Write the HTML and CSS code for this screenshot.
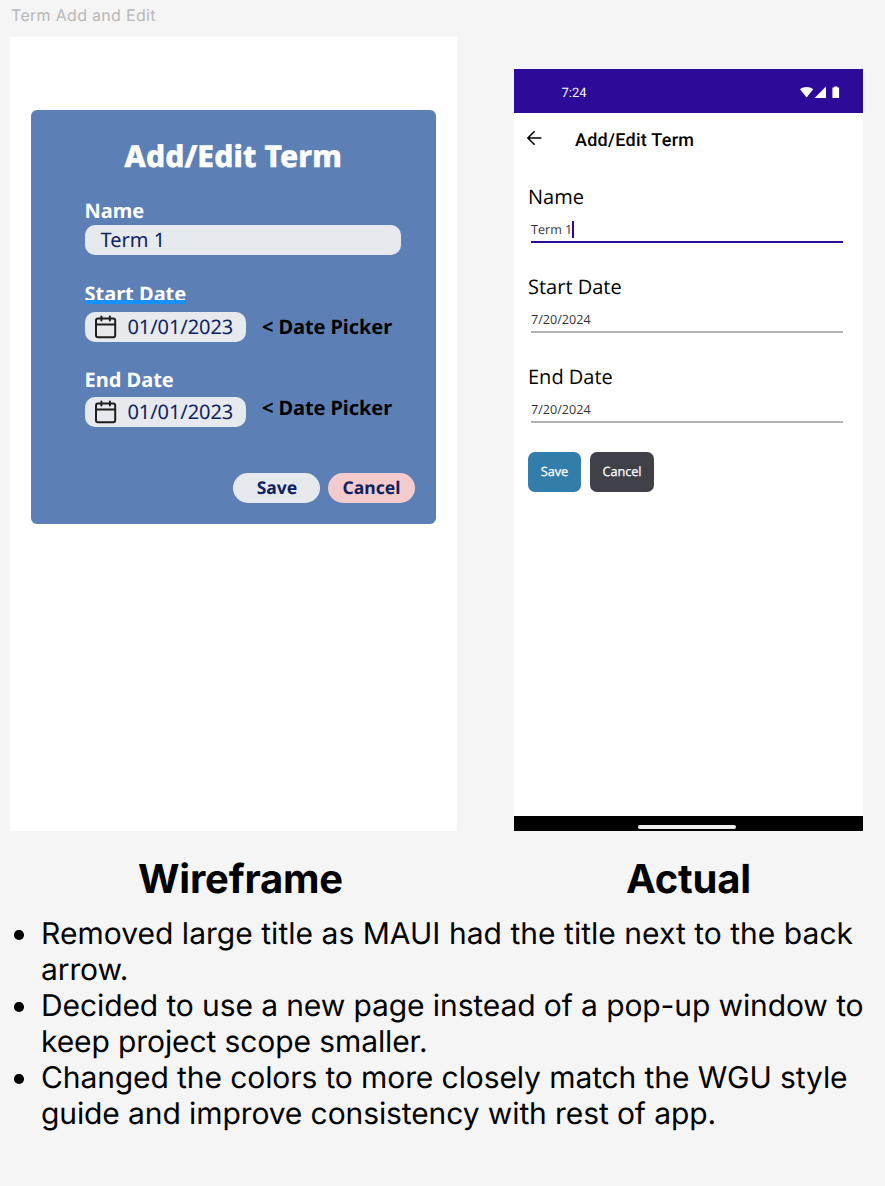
FILE: index.html
```html
<!DOCTYPE html>
<html lang="en">
<head>
<meta charset="utf-8">
<title>Term Add and Edit</title>
<link rel="stylesheet" href="styles.css">
</head>
<body>
<svg class="defs" width="0" height="0" aria-hidden="true">
  <symbol id="calendar" viewBox="0 0 24 26">
    <g fill="none" stroke="#1e1e1e" stroke-width="2" stroke-linecap="round">
      <rect x="2" y="4.600" width="19.2" height="18.600" rx="2"/>
      <path d="M2 10.500h19.2M7.4 2.500v4M15.900 2.500v4"/>
    </g>
  </symbol>
</svg>
<div class="board">
  <div class="board-label">Term Add and Edit</div>
  <div class="screens">
    <section class="wireframe">
      <div class="card">
        <h1 class="card-title"><span>Add/Edit Term</span></h1>
        <div class="label label-name"><span>Name</span></div>
        <div class="field field-name"><span>Term 1</span></div>
        <div class="label label-start"><span class="marked">Start Date</span></div>
        <div class="date-row">
          <div class="field field-date"><svg class="cal"><use href="#calendar"/></svg><span>01/01/2023</span></div>
          <span class="hint">&lt; Date Picker</span>
        </div>
        <div class="label label-end"><span>End Date</span></div>
        <div class="date-row">
          <div class="field field-date"><svg class="cal"><use href="#calendar"/></svg><span>01/01/2023</span></div>
          <span class="hint hint-high">&lt; Date Picker</span>
        </div>
        <div class="actions">
          <div class="pill">Save</div>
          <div class="pill pill-cancel">Cancel</div>
        </div>
      </div>
    </section>
    <section class="phone">
      <div class="status">
        <span class="time">7:24</span>
        <svg class="status-icons" width="42" height="14" viewBox="0 0 42 14" fill="#fff">
          <path d="M0 3.200C3.800 .3 9.400 .3 13.200 3.200L6.600 11.600z"/>
          <path d="M26 .6V11.900H14.600z"/>
          <path d="M34.200 .4h3.200v1.200h1.700V11.900h-6.700V1.600h1.800z"/>
        </svg>
      </div>
      <div class="appbar">
        <svg class="back" width="16" height="16" viewBox="0 0 16 16" fill="none" stroke="#000" stroke-width="1.6"><path d="M15.400 8H2.100M8.600 1.200L1.900 8l6.700 6.800"/></svg>
        <span>Add/Edit Term</span>
      </div>
      <div class="form">
        <div class="form-label">Name</div>
        <div class="entry entry-active"><span>Term 1</span><i class="caret"></i></div>
        <div class="form-label">Start Date</div>
        <div class="entry"><span>7/20/2024</span></div>
        <div class="form-label">End Date</div>
        <div class="entry"><span>7/20/2024</span></div>
        <div class="form-actions">
          <div class="btn">Save</div>
          <div class="btn btn-dark">Cancel</div>
        </div>
      </div>
      <div class="navbar"><i></i></div>
    </section>
  </div>
  <div class="captions">
    <h2 class="cap-wire">Wireframe</h2>
    <h2 class="cap-actual">Actual</h2>
  </div>
  <ul class="notes">
    <li><span class="first">Removed large title as MAUI had the title next to the back</span><br>arrow.</li>
    <li>Decided to use a new page instead of a pop-up window to<br>keep project scope smaller.</li>
    <li>Changed the colors to more closely match the WGU style<br>guide and improve consistency with rest of app.</li>
  </ul>
</div>
</body>
</html>
```
FILE: styles.css
```css
* { box-sizing: border-box; }
body { margin: 0; background: #f5f5f5; font-family: Inter, sans-serif; color: #000; text-rendering: geometricPrecision; }
.defs { display: block; }
.board { width: 885px; height: 1186px; overflow: hidden; white-space: nowrap; }
.board-label { height: 36.5px; padding-left: 11px; font-size: 16px; line-height: 31px; color: #b8b8b8; letter-spacing: .3px; }
.screens { display: flex; height: 794.5px; padding-left: 10px; }

.wireframe { width: 447px; padding: 73px 21px 0; background: #fff; font-family: "Noto Sans", sans-serif; }
.card { width: 405px; height: 414.700px; padding: 26.500px 21.500px 0 53.500px; background: #5c80b5; border-radius: 6px; }
.card-title { margin: 0 0 25px; padding-left: 40px; font-family: "Noto Sans", sans-serif; font-size: 30px; font-weight: 800; line-height: 40px; letter-spacing: .15px; color: #fff; -webkit-text-stroke: .5px #fff; }
.label { font-size: 20px; font-weight: 700; line-height: 20px; color: #fff; }
.label-name { height: 24px; }
.field { display: flex; align-items: center; height: 30px; border-radius: 10px; background: #e6e9ee; color: #0f2260; font-size: 20px; line-height: 30px; }
.field-name { width: 316.500px; padding-left: 16px; }
.label-start { height: 28px; margin-top: 29px; }
.marked { display: inline-block; height: 20px; position: relative; }
.marked::after { content: ""; position: absolute; left: 0; right: 0; top: 16px; height: 3.500px; background: #1590ff; }
.date-row { display: flex; gap: 16px; align-items: center; height: 30px; }
.field-date { width: 161.500px; padding-left: 9px; gap: 10px; letter-spacing: -.08px; }
.cal { width: 24px; height: 26px; flex: none; }
.hint { font-size: 20px; font-weight: 700; line-height: 30px; letter-spacing: -.08px; color: #000; }
.hint-high { margin-bottom: 9px; }
.label-end { margin-top: 28px; height: 27px; }
.actions { display: flex; justify-content: flex-end; gap: 7.500px; margin-top: 46px; }
.pill { width: 87px; height: 30px; padding-left: 1px; border-radius: 15px; background: #e6e9ee; color: #0f2260; font-size: 17.500px; font-weight: 700; line-height: 31px; text-align: center; }
.pill-cancel { background: #f4cbcc; }

.phone { display: flex; flex-direction: column; width: 349px; height: 762px; margin: 32.300px 0 0 57px; background: #fff; }
.status { display: flex; justify-content: space-between; align-items: center; height: 44.500px; padding: 3px 21px 0 47.500px; background: #2b0b98; color: #fff; }
.time { padding-top: 2px; font: 13px/16px Roboto, sans-serif; }
.appbar { display: flex; align-items: center; gap: 33px; height: 52px; padding: 2px 0 0 12px; font: 500 18px/24px Roboto, sans-serif; letter-spacing: .26px; }
.appbar span { padding-top: 1.500px; }
.back { margin-bottom: 4px; }
.form { flex: 1; padding: 19px 20px 0 14px; font-family: "Open Sans", sans-serif; }
.form-label { height: 29px; font-size: 20px; line-height: 26px; }
.entry { display: flex; align-items: center; height: 30px; margin: 0 0 31px 3px; border-bottom: 2px solid #b3b3b3; padding-top: 4px; font-size: 12.600px; color: #333; }
.entry-active { border-color: #2b0b98; }
.caret { width: 2px; height: 17px; background: #2b0b98; }
.form-actions { display: flex; gap: 9px; margin-top: -2px; }
.btn { width: 53px; height: 40px; border-radius: 7px; background: #337dab; color: #fff; font-size: 12.800px; line-height: 39px; text-align: center; letter-spacing: -.1px; -webkit-text-stroke: .25px #fff; }
.btn-dark { width: 64px; background: #404048; }
.navbar { display: flex; justify-content: center; height: 15px; padding: 9px 3px 0 0; background: #000; }
.navbar i { width: 98px; height: 4px; border-radius: 2px; background: #eee; }

.captions { display: flex; height: 84px; padding-top: 24px; }
.captions h2 { margin: 0; font-size: 40px; line-height: 48px; font-weight: 700; letter-spacing: -.2px; }
.cap-wire { width: 488px; padding-left: 138px; }
.cap-actual { padding-left: 138px; }
.notes { list-style: none; margin: 0; padding: 1px 0 0 41px; font-size: 30px; line-height: 36px; font-weight: 400; letter-spacing: -.1px; }
.notes li { position: relative; }
.first { letter-spacing: .03px; }
.notes li::before { content: ""; position: absolute; left: -27px; top: 14px; width: 9.500px; height: 9.500px; border-radius: 50%; background: #000; }
```
